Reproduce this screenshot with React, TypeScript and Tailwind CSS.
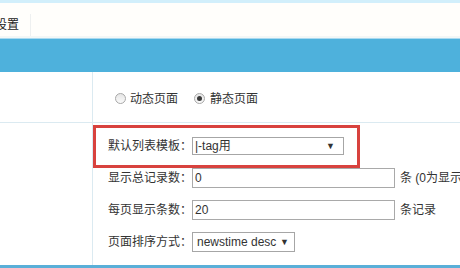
import React from "react";

const Radio = ({ checked }: { checked?: boolean }) => (
  <span className="relative inline-flex w-[11px] h-[11px] shrink-0 rounded-full border border-[#a8a8a8] bg-gradient-to-b from-[#e6e6e6] to-[#fafafa] items-center justify-center">
    {checked && <span className="w-[5px] h-[5px] rounded-full bg-[#3a3a3a]" />}
  </span>
);

export default function App() {
  return (
    <div className="relative w-[460px] h-[268px] overflow-hidden bg-white text-[12px] leading-none text-[#333] font-['Liberation_Sans','Noto_Sans_CJK_SC',sans-serif]">
      <div className="h-[3px] bg-[#d2effb]" />
      <div className="h-[33px] flex items-end bg-[#fffefb]">
        <div className="h-[22px] pr-[11px] -ml-[5px] flex items-center border-r border-[#eef0f0] text-[#222]">
          设置
        </div>
      </div>
      <div className="h-[2px] bg-[#f3f7f6]" />
      <div className="h-px bg-[#a9d9ef]" />
      <div className="h-[33px] bg-[#4eb1dc]" />
      <div className="flex h-[51px] border-b border-[#dbeaf1]">
        <div className="w-[93px] shrink-0 border-r border-[#dbeaf1]" />
        <div className="flex items-center pl-[22px] pt-[3px] whitespace-nowrap">
          <Radio />
          <span className="ml-[4px]">动态页面</span>
          <span className="ml-[16px]" />
          <Radio checked />
          <span className="ml-[5px]">静态页面</span>
        </div>
      </div>
      <div className="flex h-[142px]">
        <div className="w-[93px] shrink-0 border-r border-[#dbeaf1]" />
        <div className="flex flex-col pl-[15px] pt-[7px] whitespace-nowrap">
          <div className="h-[32px] flex items-center">
            <span className="w-[84px] shrink-0">默认列表模板：</span>
            <div className="w-[152px] shrink-0 h-[18px] border border-[#a6a6a6] flex items-center justify-between pl-[2px] pr-[8px]">
              <span>|-tag用</span>
              <span className="text-[9px]">▼</span>
            </div>
          </div>
          <div className="h-[32px] flex items-center">
            <span className="w-[84px] shrink-0">显示总记录数：</span>
            <div className="w-[203px] shrink-0 h-[20px] border border-[#a9a9a9] flex items-center pl-[2px]">0</div>
            <span className="ml-[5px]">条 (0为显示全部记录)</span>
          </div>
          <div className="h-[32px] flex items-center">
            <span className="w-[84px] shrink-0">每页显示条数：</span>
            <div className="w-[203px] shrink-0 h-[20px] border border-[#a9a9a9] flex items-center pl-[2px]">20</div>
            <span className="ml-[5px]">条记录</span>
          </div>
          <div className="h-[32px] flex items-center">
            <span className="w-[84px] shrink-0">页面排序方式：</span>
            <div className="w-[103px] shrink-0 h-[20px] border border-[#a6a6a6] flex items-center justify-between pl-[4px] pr-[5px]">
              <span>newstime desc</span>
              <span className="text-[9px]">▼</span>
            </div>
          </div>
        </div>
      </div>
      <div className="h-[3px] bg-[#5aafd8]" />
      <div className="absolute left-[93px] top-[125px] w-[267px] h-[43px] border-[3px] border-[#d8423e]" />
    </div>
  );
}
